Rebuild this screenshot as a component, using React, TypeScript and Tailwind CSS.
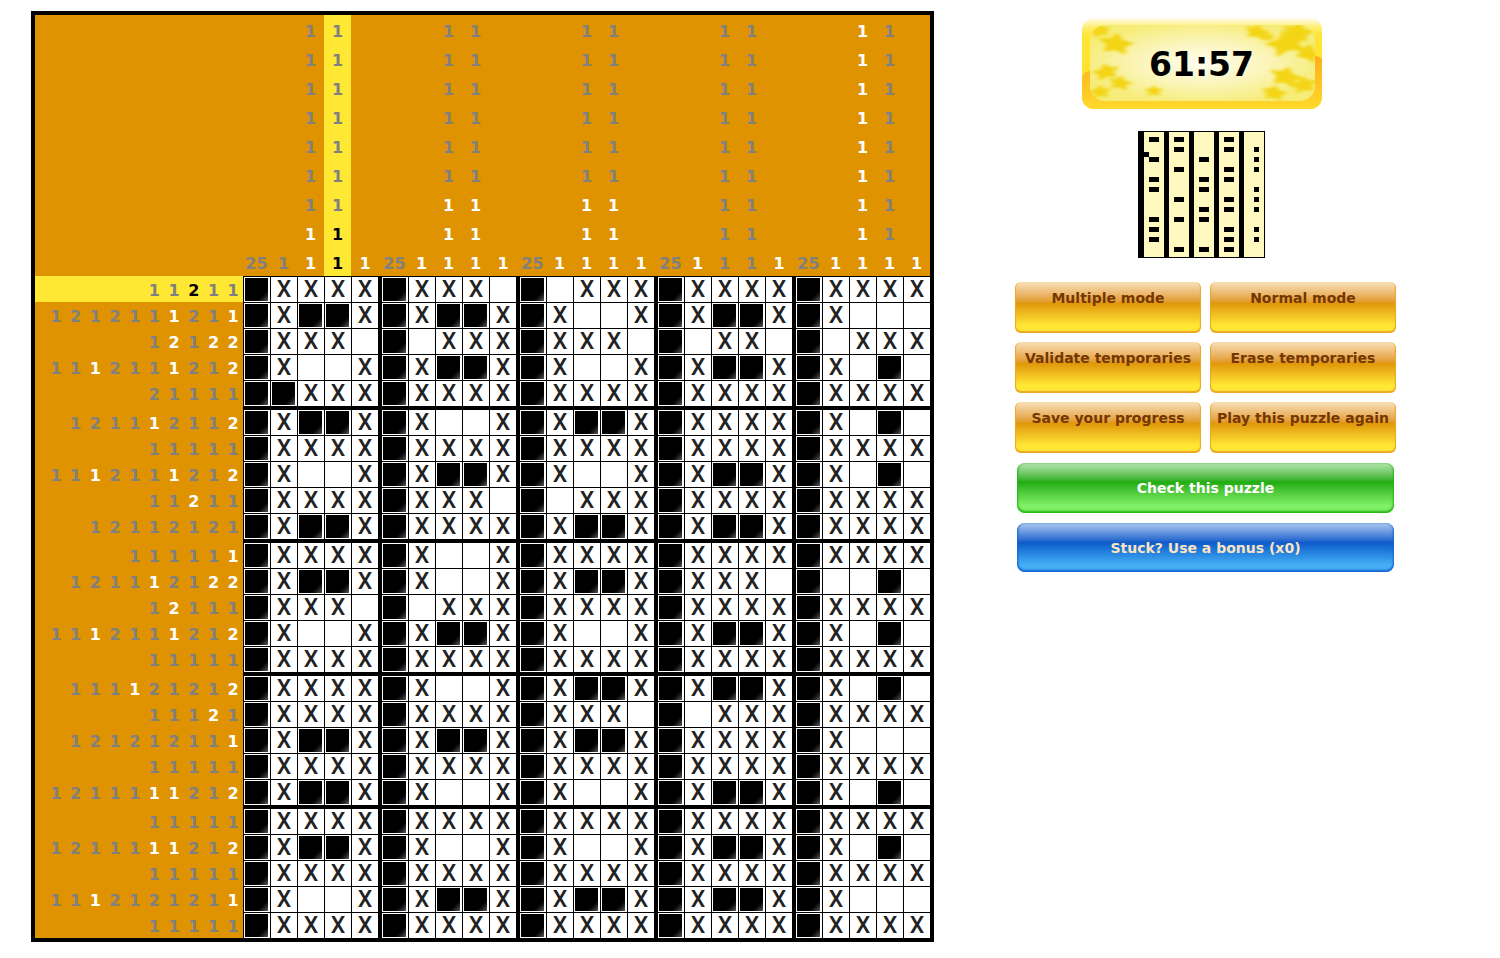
import { useId } from "react";

const GRID: string[] = [
  "#XXXX#XXX.#.XXX#XXXX#XXXX",
  "#X##X#X##X#X..X#X##X#X...",
  "#XXX.#.XXX#XXX.#.XX.#.XXX",
  "#X..X#X##X#X..X#X##X#X.#.",
  "##XXX#XXXX#XXXX#XXXX#XXXX",
  "#X##X#X..X#X##X#XXXX#X.#.",
  "#XXXX#XXXX#XXXX#XXXX#XXXX",
  "#X..X#X##X#X..X#X##X#X.#.",
  "#XXXX#XXX.#.XXX#XXXX#XXXX",
  "#X##X#XXXX#X##X#X##X#XXXX",
  "#XXXX#X..X#XXXX#XXXX#XXXX",
  "#X##X#X..X#X##X#XXX.#..#.",
  "#XXX.#.XXX#XXXX#XXXX#XXXX",
  "#X..X#X##X#X..X#X##X#X.#.",
  "#XXXX#XXXX#XXXX#XXXX#XXXX",
  "#XXXX#X..X#X##X#X##X#X.#.",
  "#XXXX#XXXX#XXX.#.XXX#XXXX",
  "#X##X#X##X#X##X#XXXX#X...",
  "#XXXX#XXXX#XXXX#XXXX#XXXX",
  "#X##X#X..X#X..X#X##X#X.#.",
  "#XXXX#XXXX#XXXX#XXXX#XXXX",
  "#X##X#X..X#X..X#X##X#X.#.",
  "#XXXX#XXXX#XXXX#XXXX#XXXX",
  "#X..X#X##X#X##X#X##X#X...",
  "#XXXX#XXXX#XXXX#XXXX#XXXX",
];

/* A star after a clue marks a run that is still to be found. */
const ROW_CLUES: string[] = [
  "1 1 2* 1 1",
  "1 2 1 2 1 1 1* 2 1 1*",
  "1 2* 1 2* 2*",
  "1 1 1* 2 1 1 1* 2 1 2*",
  "2 1 1 1 1",
  "1 2 1 1 1* 2 1 1 2*",
  "1 1 1 1 1",
  "1 1 1* 2 1 1 1* 2 1 2*",
  "1 1 2* 1 1",
  "1 2 1 1 2 1 2 1",
  "1 1 1 1 1 1*",
  "1 2 1 1 1* 2 1 2* 2*",
  "1 2* 1 1 1",
  "1 1 1* 2 1 1 1* 2 1 2*",
  "1 1 1 1 1",
  "1 1 1 1* 2 1 2 1 2*",
  "1 1 1 2* 1",
  "1 2 1 2 1 2 1 1 1*",
  "1 1 1 1 1",
  "1 2 1 1 1 1* 1* 2 1 2*",
  "1 1 1 1 1",
  "1 2 1 1 1 1* 1* 2 1 2*",
  "1 1 1 1 1",
  "1 1 1* 2 1 2 1 2 1 1*",
  "1 1 1 1 1",
];

const COLUMN_CLUES: string[] = [
  "25",
  "1",
  "1 1 1 1 1 1 1 1* 1*",
  "1 1 1 1 1 1 1 1* 1*",
  "1*",
  "25",
  "1*",
  "1 1 1 1 1 1 1* 1* 1*",
  "1 1 1 1 1 1 1* 1* 1*",
  "1*",
  "25",
  "1*",
  "1 1 1 1 1 1 1* 1* 1*",
  "1 1 1 1 1 1 1* 1* 1*",
  "1*",
  "25",
  "1*",
  "1 1 1 1 1 1 1 1 1",
  "1 1 1 1 1 1 1 1 1",
  "1*",
  "25",
  "1*",
  "1* 1* 1* 1* 1* 1* 1* 1* 1*",
  "1 1 1 1 1 1 1 1 1*",
  "1*",
];

const ACTIVE_ROW = 0;
const ACTIVE_COLUMN = 3;

const endsBlock = (i: number) => i % 5 === 4 && i !== 24;

function clueColor(clue: string, active: boolean) {
  if (!clue.endsWith("*")) return "text-[#808080]";
  return active ? "text-black" : "text-white";
}

function ColumnHeader({ clues, index }: { clues: string; index: number }) {
  const active = index === ACTIVE_COLUMN;
  return (
    <th
      scope="col"
      className={`h-[261px] p-0 align-bottom ${active ? "bg-[#ffe834]" : ""} ${endsBlock(index) ? "w-[30px] pr-0.5" : "w-[27px]"}`}
    >
      <div className="flex flex-col">
        {clues.split(" ").map((clue, i) => (
          <span key={i} className={`h-[29px] pt-px text-center leading-8 ${clueColor(clue, active)}`}>
            {clue.replace("*", "")}
          </span>
        ))}
      </div>
    </th>
  );
}

function RowHeader({ clues, index }: { clues: string; index: number }) {
  const active = index === ACTIVE_ROW;
  return (
    <th
      scope="row"
      className={`w-[208px] pt-0 pr-0 pl-[11px] align-middle ${active ? "bg-[#ffe834]" : ""} ${endsBlock(index) ? "pb-0.5" : "pb-0"}`}
    >
      <div className="flex justify-end pt-[3px] leading-5">
        {clues.split(" ").map((clue, i) => (
          <span key={i} className={`w-[10%] text-center ${clueColor(clue, active)}`}>
            {clue.replace("*", "")}
          </span>
        ))}
      </div>
    </th>
  );
}

function Cell({ value, row, column }: { value: string; row: number; column: number }) {
  return (
    <td
      className={`border-t border-l border-black bg-white p-0 ${endsBlock(column) ? "border-r-[3px]" : ""} ${endsBlock(row) ? "border-b-[3px]" : ""}`}
    >
      <button
        type="button"
        aria-label={`Row ${row + 1}, column ${column + 1}`}
        className="flex h-[25px] w-[26px] items-center justify-center overflow-hidden pr-px"
      >
        {value === "#" && (
          <span className="size-[23px] bg-linear-135 from-black from-70% to-[#5c5c5c]" />
        )}
        {value === "X" && (
          <span className="pt-px pl-px font-[Roboto] text-[23px] leading-6 font-medium text-[#222]">X</span>
        )}
      </button>
    </td>
  );
}

function Board() {
  return (
    <table className="border-separate border-spacing-0 border-4 border-black bg-[#df9300] text-base font-bold">
      <thead>
        <tr>
          <td className="w-[208px] p-0" />
          {COLUMN_CLUES.map((clues, i) => (
            <ColumnHeader key={i} clues={clues} index={i} />
          ))}
        </tr>
      </thead>
      <tbody>
        {GRID.map((line, r) => (
          <tr key={r}>
            <RowHeader clues={ROW_CLUES[r]} index={r} />
            {line.split("").map((value, c) => (
              <Cell key={c} value={value} row={r} column={c} />
            ))}
          </tr>
        ))}
      </tbody>
    </table>
  );
}

function Preview() {
  return (
    <svg width="127" height="127" viewBox="0 0 127 127" shapeRendering="crispEdges" className="block">
      <rect width="127" height="127" fill="#000" />
      <rect x="1" y="1" width="125" height="125" fill="#fff9bf" />
      {GRID.flatMap((line, r) =>
        line.split("").map((value, c) =>
          value === "#" ? <rect key={`${r}-${c}`} x={1 + c * 5} y={1 + r * 5} width="5" height="5" /> : null,
        ),
      )}
    </svg>
  );
}

const STARS: [number, number, number, number][] = [
  [34, 26, 19, 8],
  [18, 13, 12, -10],
  [175, 14, 14, 12],
  [186, 19, 8, 0],
  [205, 25, 23, -14],
  [216, 14, 17, 10],
  [226, 35, 16, 20],
  [24, 54, 15, -12],
  [38, 65, 13, 10],
  [18, 74, 12, -6],
  [72, 73, 10, 0],
  [204, 59, 18, 14],
  [222, 67, 15, -8],
  [192, 75, 14, 10],
];

function starPoints(radius: number) {
  return Array.from({ length: 10 }, (_, i) => {
    const r = i % 2 ? radius * 0.54 : radius;
    const a = (Math.PI / 5) * i - Math.PI / 2;
    return `${(Math.cos(a) * r).toFixed(1)},${(Math.sin(a) * r * 0.6).toFixed(1)}`;
  }).join(" ");
}

function Timer() {
  const id = useId();
  return (
    <div className="relative flex h-[91px] w-[240px] items-center justify-center pt-0.5">
      <svg className="absolute inset-0" width="240" height="91" viewBox="0 0 240 91" aria-hidden="true">
        <defs>
          <linearGradient id={`${id}-frame`} x1="0" y1="0" x2="0" y2="1">
            <stop offset="0" stopColor="#fffdf0" />
            <stop offset="0.1" stopColor="#ffee70" />
            <stop offset="0.2" stopColor="#ffe534" />
            <stop offset="1" stopColor="#ffe02c" />
          </linearGradient>
          <linearGradient id={`${id}-base`} x1="0" y1="0" x2="0" y2="1">
            <stop offset="0" stopColor="#ffae1c" />
            <stop offset="1" stopColor="#ffd92c" />
          </linearGradient>
          <radialGradient id={`${id}-face`} cx="0.5" cy="0.5" r="0.55">
            <stop offset="0" stopColor="#fffef0" />
            <stop offset="0.5" stopColor="#fbf5bc" />
            <stop offset="1" stopColor="#f6ec78" />
          </radialGradient>
          <clipPath id={`${id}-outer`}>
            <rect width="240" height="91" rx="12" />
          </clipPath>
          <clipPath id={`${id}-inner`}>
            <rect x="8" y="7" width="225" height="76" rx="15" />
          </clipPath>
          <filter id={`${id}-soft`} x="-20%" y="-20%" width="140%" height="140%">
            <feGaussianBlur stdDeviation="2.2 1.1" />
          </filter>
        </defs>
        <g clipPath={`url(#${id}-outer)`}>
          <rect width="240" height="91" fill={`url(#${id}-frame)`} />
          <path d="M0 60Q1 54 8 53L232 38Q239 38 240 42V91H0Z" fill={`url(#${id}-base)`} />
        </g>
        <g clipPath={`url(#${id}-inner)`}>
          <rect x="8" y="7" width="225" height="76" fill={`url(#${id}-face)`} />
          <g fill="#f3d512" filter={`url(#${id}-soft)`}>
            {STARS.map(([x, y, radius, turn], i) => (
              <polygon key={i} points={starPoints(radius)} transform={`translate(${x} ${y}) rotate(${turn})`} />
            ))}
          </g>
        </g>
      </svg>
      <time className="relative text-[33px] leading-10 font-bold text-black">61:57</time>
    </div>
  );
}

const MODES = [
  "Multiple mode",
  "Normal mode",
  "Validate temporaries",
  "Erase temporaries",
  "Save your progress",
  "Play this puzzle again",
];

export default function App() {
  return (
    <div className="flex items-start pt-[11px] pl-[31px] font-['DejaVu_Sans',sans-serif]">
      <main className="shrink-0">
        <Board />
      </main>
      <aside className="ml-[73px] flex w-[389px] shrink-0 flex-col items-center pt-[7px] text-sm font-bold">
        <Timer />
        <div className="mt-[22px]">
          <Preview />
        </div>
        <div className="mt-6 w-full pl-2">
          <div className="grid grid-cols-2 gap-x-[9px] gap-y-[9px]">
            {MODES.map((label) => (
              <button
                key={label}
                type="button"
                className="flex h-[51px] items-start justify-center rounded-md bg-linear-to-b from-[#f8e0b8] via-[#e09708] via-42% to-[#ffe734] to-85% pt-[7px] leading-[18px] whitespace-nowrap text-[#753600] shadow-[inset_0_-1px_1px_1px_#eca726]"
              >
                {label}
              </button>
            ))}
          </div>
          <div className="mt-[10px] flex flex-col gap-[10px] px-0.5">
            <button
              type="button"
              className="h-[50px] rounded-lg bg-linear-to-b from-[#b4e6ae] via-[#1fad0d] via-38% to-[#80f066] to-85% text-white shadow-[inset_0_-1px_2px_1px_#27b516]"
            >
              Check this puzzle
            </button>
            <button
              type="button"
              className="h-[49px] rounded-lg bg-linear-to-b from-[#adc9ef] via-[#0d5bc9] via-40% to-[#45aef5] to-85% text-[#fbe3c4] shadow-[inset_0_-1px_2px_1px_#1464d0]"
            >
              Stuck? Use a bonus (x0)
            </button>
          </div>
        </div>
      </aside>
    </div>
  );
}
